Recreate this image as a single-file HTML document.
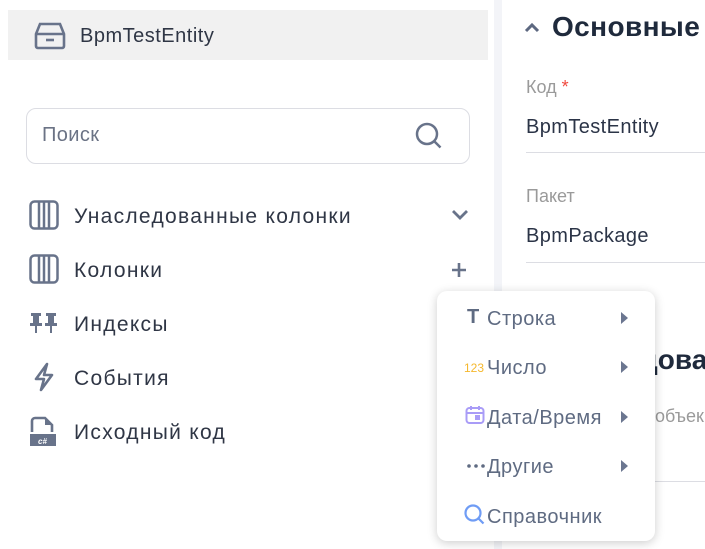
<!DOCTYPE html>
<html><head><meta charset="utf-8"><style>
*{box-sizing:border-box;margin:0;padding:0}
body{width:705px;height:549px;overflow:hidden;background:#fff;font-family:"Liberation Sans",sans-serif;position:relative;color:#2b3447}
.abs{position:absolute}
.strip{left:494px;top:0;width:8px;height:549px;background:#f3f4f8}
.head{left:8px;top:10px;width:480px;height:50px;background:#f1f1f1}
.t{font-size:21px;letter-spacing:1.3px;color:#2f3645;white-space:nowrap}
.search{left:26px;top:108px;width:444px;height:56px;border:1px solid #dcdde3;border-radius:10px}
.menu{left:437px;top:291px;width:218px;height:250px;background:#fff;border-radius:10px;box-shadow:0 2px 10px rgba(0,0,0,.2)}
.mi{position:absolute;left:50px;font-size:20px;letter-spacing:0.5px;color:#5f6b82;white-space:nowrap}
.arr{position:absolute;left:184px;width:0;height:0;border-left:7px solid #6b7690;border-top:6px solid transparent;border-bottom:6px solid transparent}
.lbl{font-size:18px;color:#9a9a9a}
.val{font-size:20px;letter-spacing:0.4px;color:#2b3447}
.line{height:1px;background:#dcdde3}
</style></head><body>
<div class="abs head"></div>
<svg class="abs" style="left:34px;top:22px" width="32" height="28" viewBox="0 0 32 28" fill="none" stroke="#68738a" stroke-width="2.6"><path d="M6 2h20l4 10v12a2 2 0 0 1-2 2H4a2 2 0 0 1-2-2V12z"/><path d="M2 12h28"/><path d="M12 18h8"/></svg>
<div class="abs t" style="left:80px;top:25px;font-size:20px;letter-spacing:0.5px">BpmTestEntity</div>

<div class="abs search"></div>
<div class="abs" style="left:42px;top:124px;font-size:20px;color:#6b7385;letter-spacing:0.4px">Поиск</div>
<svg class="abs" style="left:414px;top:121px" width="30" height="30" viewBox="0 0 30 30" fill="none" stroke="#68738a" stroke-width="2.5"><circle cx="13" cy="13" r="10"/><path d="M20.5 20.5l6 6"/></svg>

<svg class="abs" style="left:29px;top:200px" width="30" height="30" viewBox="0 0 30 30" fill="none" stroke="#68738a" stroke-width="2.5"><rect x="1.5" y="1.5" width="27" height="27" rx="4"/><path d="M10 2v26M15 2v26M20 2v26"/></svg>
<div class="abs t" style="left:74px;top:205px">Унаследованные колонки</div>
<svg class="abs" style="left:451px;top:209px" width="18" height="12" viewBox="0 0 18 12" fill="none" stroke="#68738a" stroke-width="2.8"><path d="M2 2l7 7 7-7"/></svg>

<svg class="abs" style="left:29px;top:254px" width="30" height="30" viewBox="0 0 30 30" fill="none" stroke="#68738a" stroke-width="2.5"><rect x="1.5" y="1.5" width="27" height="27" rx="4"/><path d="M10 2v26M15 2v26M20 2v26"/></svg>
<div class="abs t" style="left:74px;top:259px">Колонки</div>
<svg class="abs" style="left:452px;top:263px" width="14" height="14" viewBox="0 0 14 14" stroke="#68738a" stroke-width="2.6"><path d="M7 0v14M0 7h14"/></svg>

<svg class="abs" style="left:30px;top:312px" width="28" height="22" viewBox="0 0 28 22" fill="#68738a"><path d="M1 1h10v3H9v7h3v3H7v7H5v-7H0v-3h3V4H1z"/><path d="M16 1h10v3h-2v7h3v3h-5v7h-2v-7h-5v-3h3V4h-2z"/></svg>
<div class="abs t" style="left:74px;top:313px">Индексы</div>

<svg class="abs" style="left:32px;top:362px" width="24" height="30" viewBox="0 0 24 30" fill="none" stroke="#68738a" stroke-width="2.6" stroke-linejoin="round"><path d="M15 2L4 17h8l-3 11 11-15h-8z"/></svg>
<div class="abs t" style="left:74px;top:367px">События</div>

<svg class="abs" style="left:28px;top:416px" width="30" height="30" viewBox="0 0 30 30"><path d="M4 16V5a3 3 0 0 1 3-3h10l7 7v7" fill="none" stroke="#68738a" stroke-width="2.6"/><path d="M17 2v7h7" fill="#68738a"/><rect x="2" y="18" width="26" height="12" fill="#68738a"/><text x="10" y="28" font-size="8" font-style="italic" font-weight="bold" fill="#fff" font-family="Liberation Sans">c#</text></svg>
<div class="abs t" style="left:74px;top:421px">Исходный код</div>

<div class="abs strip"></div>

<svg class="abs" style="left:524px;top:21px" width="16" height="12" viewBox="0 0 16 12" fill="none" stroke="#5d6880" stroke-width="3"><path d="M2 10l6-6 6 6"/></svg>
<div class="abs" style="left:552px;top:11px;font-size:28px;letter-spacing:0.4px;font-weight:bold;color:#1f2a3c;white-space:nowrap">Основные</div>
<div class="abs lbl" style="left:526px;top:77px">Код <span style="color:#f0493e">*</span></div>
<div class="abs val" style="left:526px;top:116px">BpmTestEntity</div>
<div class="abs line" style="left:526px;top:152px;width:179px"></div>
<div class="abs lbl" style="left:526px;top:186px">Пакет</div>
<div class="abs val" style="left:526px;top:225px">BpmPackage</div>
<div class="abs line" style="left:526px;top:262px;width:179px"></div>
<div class="abs" style="left:640px;top:344px;font-size:28px;font-weight:bold;color:#1f2a3c">дова</div>
<div class="abs lbl" style="left:655px;top:406px">объек</div>
<div class="abs line" style="left:650px;top:481px;width:55px"></div>

<div class="abs menu">
  <div class="abs" style="left:30px;top:15px;font-size:20px;font-weight:bold;color:#5f6b82">T</div>
  <div class="mi" style="top:17px">Строка</div><div class="arr" style="top:21px"></div>
  <div class="abs" style="left:27px;top:70px;font-size:12px;color:#f5b82e">123</div>
  <div class="mi" style="top:66px">Число</div><div class="arr" style="top:70px"></div>
  <svg class="abs" style="left:28px;top:114px" width="20" height="20" viewBox="0 0 20 20" fill="none" stroke="#a99cf7" stroke-width="2"><rect x="1.5" y="3" width="17" height="15" rx="3"/><path d="M1.5 8h17M6 1v4M14 1v4"/><rect x="11" y="11" width="3" height="3" fill="#a99cf7"/></svg>
  <div class="mi" style="top:116px">Дата/Время</div><div class="arr" style="top:120px"></div>
  <svg class="abs" style="left:30px;top:173px" width="18" height="4"><circle cx="2" cy="2" r="1.8" fill="#5f6b82"/><circle cx="9" cy="2" r="1.8" fill="#5f6b82"/><circle cx="16" cy="2" r="1.8" fill="#5f6b82"/></svg>
  <div class="mi" style="top:165px">Другие</div><div class="arr" style="top:169px"></div>
  <svg class="abs" style="left:27px;top:213px" width="22" height="22" viewBox="0 0 22 22" fill="none" stroke="#6f9cf5" stroke-width="2.2"><circle cx="9" cy="9" r="7.5"/><path d="M14.5 14.5l5 5"/></svg>
  <div class="mi" style="top:215px">Справочник</div>
</div>
</body></html>
